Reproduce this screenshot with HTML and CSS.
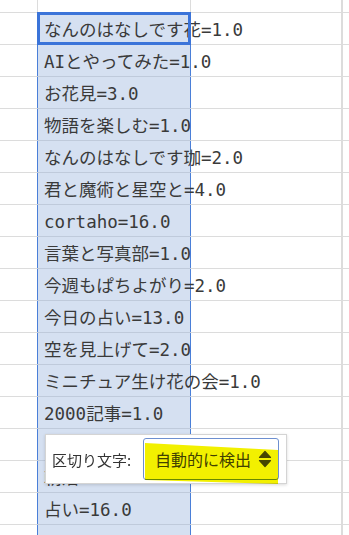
FILE: index.html
```html
<!DOCTYPE html>
<html lang="ja">
<head>
    <meta charset="UTF-8">
    <meta name="viewport" content="width=device-width, initial-scale=1.0">
    <title>Sheet</title>
    <link rel="stylesheet" href="styles.css">
</head>
<body>

<!-- Grid -->
<div class="sheet">
    <div class="row row-top">
        <div class="cell col-a"></div>
        <div class="cell col-b"></div>
        <div class="cell col-c"></div>
        <div class="cell col-d"></div>
    </div>
    <div class="row">
        <div class="cell col-a"></div>
        <div class="cell col-b active">なんのはなしです花=1.0</div>
        <div class="cell col-c"></div>
        <div class="cell col-d"></div>
    </div>
    <div class="row">
        <div class="cell col-a"></div>
        <div class="cell col-b">AIとやってみた=1.0</div>
        <div class="cell col-c"></div>
        <div class="cell col-d"></div>
    </div>
    <div class="row">
        <div class="cell col-a"></div>
        <div class="cell col-b">お花見=3.0</div>
        <div class="cell col-c"></div>
        <div class="cell col-d"></div>
    </div>
    <div class="row">
        <div class="cell col-a"></div>
        <div class="cell col-b">物語を楽しむ=1.0</div>
        <div class="cell col-c"></div>
        <div class="cell col-d"></div>
    </div>
    <div class="row">
        <div class="cell col-a"></div>
        <div class="cell col-b">なんのはなしです珈=2.0</div>
        <div class="cell col-c"></div>
        <div class="cell col-d"></div>
    </div>
    <div class="row">
        <div class="cell col-a"></div>
        <div class="cell col-b">君と魔術と星空と=4.0</div>
        <div class="cell col-c"></div>
        <div class="cell col-d"></div>
    </div>
    <div class="row">
        <div class="cell col-a"></div>
        <div class="cell col-b">cortaho=16.0</div>
        <div class="cell col-c"></div>
        <div class="cell col-d"></div>
    </div>
    <div class="row">
        <div class="cell col-a"></div>
        <div class="cell col-b">言葉と写真部=1.0</div>
        <div class="cell col-c"></div>
        <div class="cell col-d"></div>
    </div>
    <div class="row">
        <div class="cell col-a"></div>
        <div class="cell col-b">今週もぱちよがり=2.0</div>
        <div class="cell col-c"></div>
        <div class="cell col-d"></div>
    </div>
    <div class="row">
        <div class="cell col-a"></div>
        <div class="cell col-b">今日の占い=13.0</div>
        <div class="cell col-c"></div>
        <div class="cell col-d"></div>
    </div>
    <div class="row">
        <div class="cell col-a"></div>
        <div class="cell col-b">空を見上げて=2.0</div>
        <div class="cell col-c"></div>
        <div class="cell col-d"></div>
    </div>
    <div class="row">
        <div class="cell col-a"></div>
        <div class="cell col-b">ミニチュア生け花の会=1.0</div>
        <div class="cell col-c"></div>
        <div class="cell col-d"></div>
    </div>
    <div class="row">
        <div class="cell col-a"></div>
        <div class="cell col-b">2000記事=1.0</div>
        <div class="cell col-c"></div>
        <div class="cell col-d"></div>
    </div>
    <div class="row">
        <div class="cell col-a"></div>
        <div class="cell col-b"></div>
        <div class="cell col-c"></div>
        <div class="cell col-d"></div>
    </div>
    <div class="row">
        <div class="cell col-a"></div>
        <div class="cell col-b">朝活=1.0</div>
        <div class="cell col-c"></div>
        <div class="cell col-d"></div>
    </div>
    <div class="row">
        <div class="cell col-a"></div>
        <div class="cell col-b">占い=16.0</div>
        <div class="cell col-c"></div>
        <div class="cell col-d"></div>
    </div>
    <div class="row">
        <div class="cell col-a"></div>
        <div class="cell col-b">ノート=1.0</div>
        <div class="cell col-c"></div>
        <div class="cell col-d"></div>
    </div>

    <!-- Delimiter popup -->
    <div class="popup">
        <span class="popup-label">区切り文字:</span>
        <div class="select">
            <span class="select-text">自動的に検出</span>
            <svg class="select-arrows" width="14" height="18" viewBox="0 0 14 18">
                <path d="M7 1.5 L12.5 7.5 L1.5 7.5 Z" fill="#4a4a4a" stroke="#4a4a4a" stroke-linejoin="round" stroke-width="1.2"/>
                <path d="M1.5 10.5 L12.5 10.5 L7 16.5 Z" fill="#4a4a4a" stroke="#4a4a4a" stroke-linejoin="round" stroke-width="1.2"/>
            </svg>
            <div class="marker"></div>
        </div>
    </div>
</div>

</body>
</html>
```

FILE: styles.css
```css
html, body {
    margin: 0;
    padding: 0;
    height: 535px;
    overflow: hidden;
    background-color: #fff;
}
.sheet {
    position: relative;
    font-family: "DejaVu Sans Mono", "Noto Sans CJK JP", monospace;
    font-size: 17.5px;
    color: #3a3a3a;
}
.row {
    display: flex;
    height: 32px;
    border-bottom: 1px solid #dcdcdc;
    box-sizing: border-box;
}
.row-top {
    height: 13px;
}
.cell {
    box-sizing: border-box;
    height: 100%;
    white-space: nowrap;
}
.col-a {
    width: 37px;
    flex: none;
}
.col-b {
    width: 154px;
    flex: none;
    padding-left: 6px;
    line-height: 34px;
    background-color: #d5e0f1;
    border-left: 1px solid #4a7fd8;
    border-right: 1px solid #4a7fd8;
    /* gridline inside the selection is darker */
    box-shadow: 0 1px 0 #bfcadb;
    position: relative;
}
.row-top .col-b {
    background-color: #fff;
    border-left-color: #dcdcdc;
    border-right-color: #dcdcdc;
    box-shadow: none;
}
.col-c {
    width: 152px;
    flex: none;
    border-right: 2px solid #dcdcdc;
}
.col-d {
    flex: 1;
}
.active::after {
    content: "";
    position: absolute;
    left: -1px;
    right: -1px;
    top: -1px;
    bottom: -1px;
    border: 3px solid #3b74d9;
}

/* popup */
.popup {
    position: absolute;
    left: 45px;
    top: 434px;
    width: 242px;
    height: 50px;
    box-sizing: border-box;
    display: flex;
    align-items: center;
    padding: 0 7px 0 6px;
    background-color: #fff;
    border: 1px solid #d4d4d4;
    box-shadow: 0 1px 3px rgba(0, 0, 0, 0.15);
    font-family: "Noto Sans CJK JP", sans-serif;
    z-index: 2;
}
.popup-label {
    font-size: 15px;
    color: #333;
    margin-right: 8px;
}
.select {
    position: relative;
    margin-left: auto;
    width: 136px;
    height: 42px;
    box-sizing: border-box;
    display: flex;
    align-items: center;
    padding: 0 6px 0 11px;
    border: 1px solid #6d8fd0;
    border-radius: 3px;
    background-color: #fff;
}
.select-text {
    font-size: 16px;
    color: #444;
}
.select-arrows {
    margin-left: auto;
    display: block;
}
.marker {
    position: absolute;
    left: 1px;
    top: 4px;
    width: 133px;
    height: 41px;
    background-color: #f2f000;
    mix-blend-mode: multiply;
    clip-path: polygon(0 0, 100% 7px, 100% 100%, 0 calc(100% - 4px));
}
```
